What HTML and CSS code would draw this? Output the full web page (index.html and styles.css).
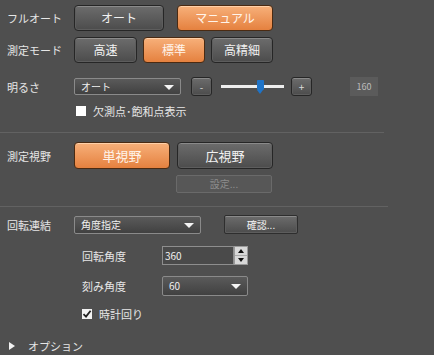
FILE: index.html
```html
<!DOCTYPE html>
<html lang="ja">
<head>
    <meta charset="UTF-8">
    <title>測定設定</title>
    <link rel="stylesheet" href="styles.css">
</head>
<body>
    <div class="panel">
        <div class="row row-mode">
            <div class="label">フルオート</div>
            <button class="btn w90">オート</button>
            <button class="btn btn-on w96 gap13">マニュアル</button>
        </div>

        <div class="row row-speed">
            <div class="label">測定モード</div>
            <button class="btn w63">高速</button>
            <button class="btn btn-on w62 gap6">標準</button>
            <button class="btn w62 gap6">高精細</button>
        </div>

        <div class="row row-bright">
            <div class="label">明るさ</div>
            <div class="select w107">オート<span class="arrow"></span></div>
            <button class="btn small gap10">-</button>
            <div class="slider">
                <div class="track"></div>
                <div class="thumb"></div>
            </div>
            <button class="btn small">+</button>
            <div class="value">160</div>
        </div>

        <div class="row row-check">
            <label class="check"><span class="box"></span>欠測点･飽和点表示</label>
        </div>

        <div class="sep"></div>

        <div class="row row-view">
            <div class="label">測定視野</div>
            <button class="btn btn-on w96 tall">単視野</button>
            <button class="btn w96 tall gap7">広視野</button>
        </div>
        <div class="row row-setup">
            <button class="btn btn-off">設定...</button>
        </div>

        <div class="sep sep2"></div>

        <div class="row row-rotate">
            <div class="label">回転連結</div>
            <div class="select w127">角度指定<span class="arrow"></span></div>
            <button class="btn btn-flat">確認...</button>
        </div>

        <div class="row row-angle">
            <div class="sublabel">回転角度</div>
            <div class="spin">
                <div class="spin-input">360</div>
                <div class="spin-btns">
                    <span class="up"></span>
                    <span class="down"></span>
                </div>
            </div>
        </div>

        <div class="row row-step">
            <div class="sublabel">刻み角度</div>
            <div class="select w86">60<span class="arrow"></span></div>
        </div>

        <div class="row row-cw">
            <label class="check"><span class="box checked">
                <svg width="10" height="10" viewBox="0 0 10 10"><path d="M1.5 5.2 L4 7.6 L8.6 1.8" fill="none" stroke="#222" stroke-width="1.8"/></svg>
            </span>時計回り</label>
        </div>

        <div class="row row-option">
            <span class="tri"></span>オプション
        </div>
    </div>
</body>
</html>
```

FILE: styles.css
```css
body {
    margin: 0;
    background: #4f4f4f;
    font-family: "Noto Sans CJK JP", "Noto Sans", sans-serif;
    color: #e6e6e6;
    font-size: 11px;
}

.panel {
    width: 434px;
    height: 355px;
    overflow: hidden;
}

.row {
    display: flex;
    align-items: center;
}

.label {
    width: 67px;
    padding-left: 7px;
    flex-shrink: 0;
    font-size: 11px;
}

.sublabel {
    width: 80px;
    padding-left: 82px;
    flex-shrink: 0;
    font-size: 11px;
}

/* buttons */
.btn {
    height: 26px;
    padding: 0;
    border: 1px solid #262626;
    border-radius: 4px;
    background: linear-gradient(#6c6c6c, #4c4c4c);
    box-shadow: inset 0 1px 0 #8a8a8a, inset 0 0 0 1px #5d5d5d;
    color: #f2f2f2;
    font-family: inherit;
    font-size: 12px;
    line-height: 1;
}

.btn-on {
    border-color: #4a2a12;
    background: linear-gradient(#f7b07a, #e5813f);
    box-shadow: inset 0 1px 0 #ffd0a8;
    color: #fff4ea;
}

.tall { height: 27px; font-size: 13px; }
.w90 { width: 90px; }
.w96 { width: 96px; }
.w63 { width: 63px; }
.w62 { width: 62px; }
.gap6 { margin-left: 6px; }
.gap7 { margin-left: 7px; }
.gap10 { margin-left: 10px; }
.gap13 { margin-left: 13px; }

.small {
    width: 21px;
    height: 19px;
    border-radius: 3px;
    font-size: 10px;
    color: #dcdcdc;
}

.btn-off {
    width: 96px;
    height: 18px;
    border: 1px solid #6a6a6a;
    border-radius: 2px;
    background: #575757;
    box-shadow: none;
    color: #8d8d8d;
    font-size: 10px;
}

.btn-flat {
    width: 74px;
    height: 19px;
    margin-left: 23px;
    border-radius: 2px;
    font-size: 10px;
    border-color: #2e2e2e;
}

/* select boxes */
.select {
    position: relative;
    height: 17px;
    box-sizing: border-box;
    padding-left: 6px;
    border: 1px solid #8a8a8a;
    border-radius: 2px;
    background: linear-gradient(#5a5a5a, #414141);
    font-size: 10px;
    line-height: 15px;
    color: #f0f0f0;
}

.w107 { width: 107px; }
.w127 { width: 127px; height: 18px; }
.w86 { width: 86px; height: 20px; line-height: 18px; }

.arrow {
    position: absolute;
    right: 6px;
    top: 50%;
    margin-top: -2px;
    border-left: 5px solid transparent;
    border-right: 5px solid transparent;
    border-top: 5px solid #f4f4f4;
}

/* slider */
.slider {
    position: relative;
    width: 63px;
    height: 19px;
    margin: 0 7px 0 9px;
}

.track {
    position: absolute;
    left: 0;
    right: 0;
    top: 8px;
    height: 3px;
    background: #eeeeee;
}

.thumb {
    position: absolute;
    left: 36px;
    top: 3px;
    width: 7px;
    height: 10px;
    background: #1f74c8;
    border-radius: 1px;
}

.thumb::after {
    content: "";
    position: absolute;
    left: 0;
    top: 10px;
    border-left: 3.5px solid transparent;
    border-right: 3.5px solid transparent;
    border-top: 4px solid #1f74c8;
}

.value {
    width: 28px;
    height: 19px;
    margin-left: 38px;
    background: #5b5b5b;
    color: #bcbcbc;
    font-size: 9px;
    line-height: 19px;
    text-align: center;
}

/* checkbox */
.check {
    display: flex;
    align-items: center;
    font-size: 11px;
}

.box {
    display: flex;
    align-items: center;
    justify-content: center;
    width: 10px;
    height: 10px;
    margin-right: 7px;
    background: #ffffff;
}

.checked { background: #f2f2f2; }

/* separators */
.sep {
    width: 384px;
    height: 1px;
    margin-top: 15px;
    background: #626262;
}

.sep2 {
    width: 388px;
    margin-top: 13px;
}

/* spinner */
.spin {
    display: flex;
    height: 19px;
}

.spin-input {
    width: 72px;
    box-sizing: border-box;
    padding-left: 2px;
    border: 1px solid #8e8e8e;
    background: #4a4a4a;
    font-size: 10px;
    line-height: 17px;
    color: #f0f0f0;
}

.spin-btns {
    display: flex;
    flex-direction: column;
    width: 14px;
    background: #d8d8d8;
    border: 1px solid #9a9a9a;
    box-sizing: border-box;
}

.spin-btns span {
    flex: 1;
    display: flex;
    align-items: center;
    justify-content: center;
}

.up::before {
    content: "";
    border-left: 3px solid transparent;
    border-right: 3px solid transparent;
    border-bottom: 4px solid #111;
}

.down {
    border-top: 1px solid #aaa;
}

.down::before {
    content: "";
    border-left: 3px solid transparent;
    border-right: 3px solid transparent;
    border-top: 4px solid #111;
}

/* options */
.tri {
    width: 0;
    height: 0;
    margin: 0 13px 0 9px;
    border-top: 4px solid transparent;
    border-bottom: 4px solid transparent;
    border-left: 6px solid #f2f2f2;
}

/* vertical placement of rows */
.row-mode { margin-top: 5px; }
.row-speed { margin-top: 6px; }
.row-bright { margin-top: 14px; }
.row-check { margin-top: 9px; padding-left: 76px; height: 12px; }
.row-view { margin-top: 9px; }
.row-setup { margin-top: 6px; padding-left: 176px; }
.row-rotate { margin-top: 8px; }
.row-angle { margin-top: 12px; }
.row-step { margin-top: 11px; }
.row-cw { margin-top: 10px; padding-left: 82px; }
.row-option { margin-top: 16px; font-size: 11px; }
```
